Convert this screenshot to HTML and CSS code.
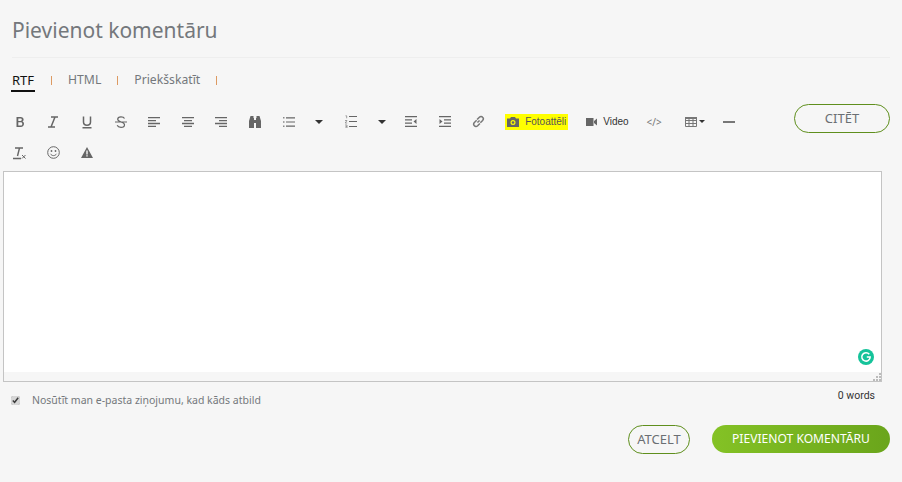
FILE: index.html
```html
<!DOCTYPE html>
<html lang="lv">
<head>
    <meta charset="UTF-8">
    <meta name="viewport" content="width=device-width, initial-scale=1.0">
    <title>Pievienot komentāru</title>
    <link rel="stylesheet" href="styles.css">
</head>
<body>
    <h1 class="title">Pievienot komentāru</h1>

    <div class="tabs">
        <span class="tab active">RTF</span>
        <span class="sep"></span>
        <span class="tab">HTML</span>
        <span class="sep"></span>
        <span class="tab">Priekšskatīt</span>
        <span class="sep"></span>
    </div>

    <div class="toolbar-row">
        <div class="toolbar">
            <span class="tool"><svg width="14" height="14" viewBox="0 0 14 14"><path d="M3.500 2h4.200c1.800 0 2.900.9 2.900 2.500 0 1-.5 1.700-1.300 2 1 .3 1.700 1.100 1.700 2.300 0 1.800-1.300 3.200-3.200 3.200H3.500zM5.300 3.500v2.400h2.200c.8 0 1.300-.5 1.300-1.200s-.5-1.200-1.300-1.200zM5.300 7.300v3.200h2.500c.9 0 1.500-.6 1.500-1.600s-.6-1.600-1.500-1.600z" fill="#666" fill-rule="evenodd"/></svg></span>
            <span class="tool"><svg width="14" height="14" viewBox="0 0 14 14"><path d="M5 2h7M2 12h7M9 2 5 12" stroke="#666" stroke-width="1.500" fill="none"/></svg></span>
            <span class="tool"><svg width="14" height="14" viewBox="0 0 14 14"><path d="M3.500 1.500V7c0 2.200 1.400 3.200 3.500 3.200s3.500-1 3.500-3.200V1.500M2.500 12.700h9" stroke="#666" stroke-width="1.500" fill="none"/></svg></span>
            <span class="tool"><svg width="14" height="14" viewBox="0 0 14 14"><path d="M10.500 3.500C10 2.400 8.800 1.800 7 1.800c-2 0-3.300 1-3.300 2.500 0 3.300 6.800 2 6.800 5.400 0 1.600-1.500 2.600-3.500 2.600s-3.300-.7-3.800-2M1 7h12" stroke="#666" stroke-width="1.200" fill="none"/></svg></span>
            <span class="tool"><svg width="12" height="10" viewBox="0 0 12 10"><path d="M0 .7h12M0 3.700h8M0 6.500h12M0 9.300h8" stroke="#666" stroke-width="1.300"/></svg></span>
            <span class="tool"><svg width="12" height="10" viewBox="0 0 12 10"><path d="M0 .7h12M2 3.700h8M0 6.500h12M2 9.300h8" stroke="#666" stroke-width="1.300"/></svg></span>
            <span class="tool"><svg width="12" height="10" viewBox="0 0 12 10"><path d="M0 .7h12M4 3.700h8M0 6.500h12M4 9.300h8" stroke="#666" stroke-width="1.300"/></svg></span>
            <span class="tool"><svg width="12" height="12" viewBox="0 0 12 12"><path d="M1.500 0h3v2H5v10H0V5zM7.500 0h3L12 5v7H7V2h.5z" fill="#666"/><path d="M5 4h2v3H5z" fill="#666"/></svg></span>
            <span class="tool"><svg width="12" height="10" viewBox="0 0 12 10"><path d="M3 .8h9M3 5h9M3 9.200h9" stroke="#666" stroke-width="1.200"/><path d="M0 .8h1.500M0 5h1.500M0 9.200h1.500" stroke="#888" stroke-width="1.400"/></svg></span>
            <span class="caret-cell"><i class="caret"></i></span>
            <span class="tool ol"><svg width="12" height="13" viewBox="0 0 12 13"><path d="M4 1.500h8M4 6.500h8M4 11.500h8" stroke="#666" stroke-width="1.200"/><path d="M.5.800h1.200v2.500M0 5.500h2L.2 8h2M0 10h2v3H0M.5 11.500H2" stroke="#888" stroke-width=".8" fill="none"/></svg></span>
            <span class="caret-cell tight"><i class="caret"></i></span>
            <span class="tool"><svg width="12" height="11" viewBox="0 0 12 11"><path d="M0 .7h12M0 10.300h12M0 3.800h7M0 7.100h7" stroke="#666" stroke-width="1.300"/><path d="M11.500 3v5L8.500 5.500z" fill="#666"/></svg></span>
            <span class="tool"><svg width="12" height="11" viewBox="0 0 12 11"><path d="M0 .7h12M0 10.300h12M5 3.800h7M5 7.100h7" stroke="#666" stroke-width="1.300"/><path d="M.5 3v5l3-2.500z" fill="#666"/></svg></span>
            <span class="tool"><svg width="13" height="13" viewBox="0 0 12 12"><path d="M5 7 7 5M4.700 4.200 6.800 2c.9-.9 2.200-.9 3 0 .8.800.8 2.100 0 3L7.700 7.100M7.300 7.800 5.200 10c-.9.900-2.200.900-3 0-.8-.8-.8-2.100 0-3l2.100-2.100" stroke="#777" stroke-width="1.400" fill="none"/></svg></span>
            <span class="hl-tool"><svg width="12" height="10" viewBox="0 0 12 10"><path d="M4 0h4l1 1.500h3V10H0V1.500h3zM6 3a2.500 2.500 0 1 0 0 5 2.500 2.500 0 0 0 0-5z" fill="#666" fill-rule="evenodd"/><circle cx="6" cy="5.500" r="1.300" fill="#666"/></svg>Fotoattēli</span>
            <span class="video-tool"><svg width="11" height="8" viewBox="0 0 11 8"><path d="M0 0h7.500v8H0zM8 3l3-2.500v7L8 5z" fill="#666"/></svg>Video</span>
            <span class="code-tool">&lt;/&gt;</span>
            <span class="table-tool"><svg width="12" height="10" viewBox="0 0 12 10"><path d="M.5.500h11v9H.5zM.5 3.500h11M.5 6.500h11M4 .5v9M8 .5v9" stroke="#777" fill="none"/><path d="M0 0h12v2H0z" fill="#777"/></svg><i class="caret small"></i></span>
            <span class="tool hr-tool"><i class="rule"></i></span>
            <span class="tool"><svg width="14" height="14" viewBox="0 0 14 14"><path d="M2 2h8M6.500 2 4.500 10M0 12.500h8" stroke="#666" stroke-width="1.400" fill="none"/><path d="m9 9 3.500 3.500M12.500 9 9 12.500" stroke="#666" stroke-width="1"/></svg></span>
            <span class="tool"><svg width="13" height="13" viewBox="0 0 13 13"><circle cx="6.500" cy="6.500" r="5.800" stroke="#666" fill="none"/><circle cx="4.500" cy="5" r=".9" fill="#666"/><circle cx="8.500" cy="5" r=".9" fill="#666"/><path d="M3.500 7.800c.7 1.200 1.700 1.800 3 1.800s2.300-.6 3-1.800" stroke="#666" fill="none"/></svg></span>
            <span class="tool"><svg width="12" height="11" viewBox="0 0 12 11"><path d="M6 0 12 11H0zM5.300 3.500v4h1.400v-4zM5.300 8.300v1.300h1.400V8.300z" fill="#666" fill-rule="evenodd"/></svg></span>
        </div>
        <a class="btn outline quote">CITĒT</a>
    </div>

    <div class="editor">
        <div class="editor-area"></div>
        <span class="grammarly"><svg width="16" height="16" viewBox="0 0 16 16"><circle cx="8" cy="8" r="8" fill="#15c39a"/><path d="M11.300 5.300A4.200 4.200 0 1 0 12.200 8H8.800" stroke="#fff" stroke-width="1.500" fill="none"/></svg></span>
        <svg class="grip" width="8" height="8" viewBox="0 0 8 8"><path d="M6 0h2v2H6zM3 3h2v2H3zM6 3h2v2H6zM0 6h2v2H0zM3 6h2v2H3zM6 6h2v2H6z" fill="#bbb"/></svg>
    </div>

    <div class="meta">
        <label class="notify"><input type="checkbox" checked> Nosūtīt man e-pasta ziņojumu, kad kāds atbild</label>
        <span class="words">0 words</span>
    </div>

    <div class="actions">
        <a class="btn outline cancel">ATCELT</a>
        <a class="btn primary">PIEVIENOT KOMENTĀRU</a>
    </div>
</body>
</html>
```

FILE: styles.css
```css
body {
    margin: 0;
    height: 482px;
    overflow: hidden;
    background: #f6f6f6;
    font-family: "Noto Sans", "Open Sans", sans-serif;
    color: #74787c;
}
.title {
    margin: 0 12px 0 12px;
    padding: 15px 0 12px;
    border-bottom: 1px solid #eeeeee;
    font-size: 21px;
    line-height: 30px;
    font-weight: 400;
}
.tabs {
    display: flex;
    align-items: center;
    margin: 12px 0 0 11px;
    height: 21px;
    font-size: 12.200px;
}
.tab {
    height: 21px;
    line-height: 20px;
    box-sizing: border-box;
}
.tab.active {
    color: #111;
    font-size: 13px;
    border-bottom: 2px solid #111;
    padding: 0 1px;
    height: 22px;
}
.sep {
    width: 1px;
    height: 9px;
    background: #dd9a62;
    margin: 0 16px;
}
.toolbar-row {
    display: flex;
    justify-content: space-between;
    align-items: flex-start;
    margin-top: 13px;
    padding-right: 12px;
    height: 67px;
}
.toolbar {
    display: flex;
    flex-wrap: wrap;
    align-items: center;
    align-content: flex-start;
    width: 770px;
    margin-left: 3px;
    padding-top: 2px;
}
.tool {
    display: flex;
    align-items: center;
    justify-content: center;
    width: 33.600px;
    height: 31px;
}
.caret-cell {
    display: flex;
    align-items: center;
    justify-content: center;
    width: 27px;
    height: 31px;
}
.caret-cell.tight {
    width: 25px;
}
.ol {
    width: 37px;
}
.caret {
    width: 0;
    height: 0;
    border: 4px solid transparent;
    border-top-color: #333;
    border-bottom: 0;
}
.caret.small {
    border-width: 3px;
    border-bottom: 0;
    margin-left: 2px;
}
.hl-tool {
    display: flex;
    align-items: center;
    gap: 6px;
    height: 16px;
    margin-left: 10px;
    padding: 0 2px;
    background: #ffff00;
    color: #555;
    font: 10px "Liberation Sans", sans-serif;
}
.video-tool {
    display: flex;
    align-items: center;
    gap: 6px;
    margin-left: 18px;
    color: #333;
    font: 10px "Liberation Sans", sans-serif;
}
.code-tool {
    width: 51px;
    text-align: center;
    font-size: 10px;
    color: #777;
}
.table-tool {
    display: flex;
    align-items: center;
    width: 26px;
    margin-left: 5px;
    margin-right: 2px;
}
.rule {
    display: block;
    width: 12px;
    height: 2px;
    background: #777;
}
.btn {
    display: inline-block;
    box-sizing: border-box;
    text-align: center;
    font-size: 13px;
    white-space: nowrap;
}
.outline {
    border: 1px solid #5f8f1d;
    background: #f6f6f6;
    color: #6b6f73;
}
.quote {
    width: 96px;
    height: 29px;
    line-height: 27px;
    border-radius: 15px;
}
.editor {
    position: relative;
    box-sizing: border-box;
    width: 879px;
    height: 211px;
    margin-left: 3px;
    border: 1px solid #c4c4c4;
}
.editor-area {
    height: 200px;
    background: #fff;
}
.grammarly {
    position: absolute;
    right: 7px;
    bottom: 17px;
    width: 16px;
    height: 16px;
}
.grip {
    position: absolute;
    right: 0;
    bottom: 0;
}
.meta {
    display: flex;
    justify-content: space-between;
    margin: 7px 27px 0 11px;
    height: 20px;
}
.notify {
    display: flex;
    align-items: center;
    font-size: 10.500px;
    margin-top: 2px;
}
.notify input {
    width: 9px;
    height: 9px;
    margin: 0 12px 0 0;
    accent-color: #d6d6d6;
}
.words {
    font: 10.500px "Roboto", sans-serif;
    color: #333;
    line-height: 14px;
}
.actions {
    display: flex;
    justify-content: flex-end;
    gap: 22px;
    margin-top: 16px;
    padding-right: 12px;
}
.cancel {
    width: 62px;
    height: 29px;
    line-height: 27px;
    border-radius: 15px;
}
.primary {
    width: 178px;
    height: 28px;
    line-height: 28px;
    border-radius: 14px;
    font-size: 12.100px;
    color: #fff;
    background: linear-gradient(to right, #84c225, #6aa51b);
}
```
